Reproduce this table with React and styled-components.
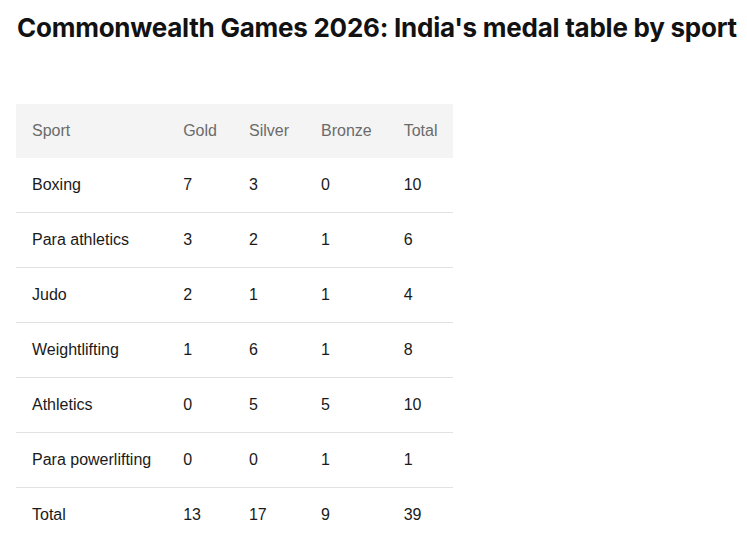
import React from 'react'
import styled, { createGlobalStyle } from 'styled-components'

const GlobalStyle = createGlobalStyle`
  body {
    margin: 0;
    background: #ffffff;
    font-family: "Liberation Sans", Arial, sans-serif;
  }
`

const Page = styled.div`
  padding: 11px 16px;
`

const Title = styled.h1`
  margin: 0 0 59px 1px;
  font-family: Inter, "Liberation Sans", sans-serif;
  font-size: 26px;
  font-weight: 700;
  line-height: 34px;
  color: #121212;
  letter-spacing: -0.25px;
  white-space: nowrap;
`

const Table = styled.table`
  border-collapse: collapse;
  font-size: 16px;
`

const HeadCell = styled.th`
  background: #f4f4f4;
  color: #6b6b6b;
  font-weight: 400;
  text-align: left;
  padding: 0 16px;
  height: 54px;
`

const Row = styled.tr`
  border-bottom: ${props => props.last ? 'none' : '1px solid #e2e2e2'};
`

const Cell = styled.td`
  color: #1a1a1a;
  padding: 0 16px;
  height: 54px;
`

const columns = ['Sport', 'Gold', 'Silver', 'Bronze', 'Total']

const rows = [
  ['Boxing', 7, 3, 0, 10],
  ['Para athletics', 3, 2, 1, 6],
  ['Judo', 2, 1, 1, 4],
  ['Weightlifting', 1, 6, 1, 8],
  ['Athletics', 0, 5, 5, 10],
  ['Para powerlifting', 0, 0, 1, 1],
  ['Total', 13, 17, 9, 39],
]

export default function App() {
  return (
    <Page>
      <GlobalStyle />
      <Title>Commonwealth Games 2026: India's medal table by sport</Title>
      <Table>
        <thead>
          <tr>
            {columns.map(c => <HeadCell key={c}>{c}</HeadCell>)}
          </tr>
        </thead>
        <tbody>
          {rows.map((r, i) => (
            <Row key={r[0]} last={i === rows.length - 1}>
              {r.map((v, j) => <Cell key={j}>{v}</Cell>)}
            </Row>
          ))}
        </tbody>
      </Table>
    </Page>
  )
}
